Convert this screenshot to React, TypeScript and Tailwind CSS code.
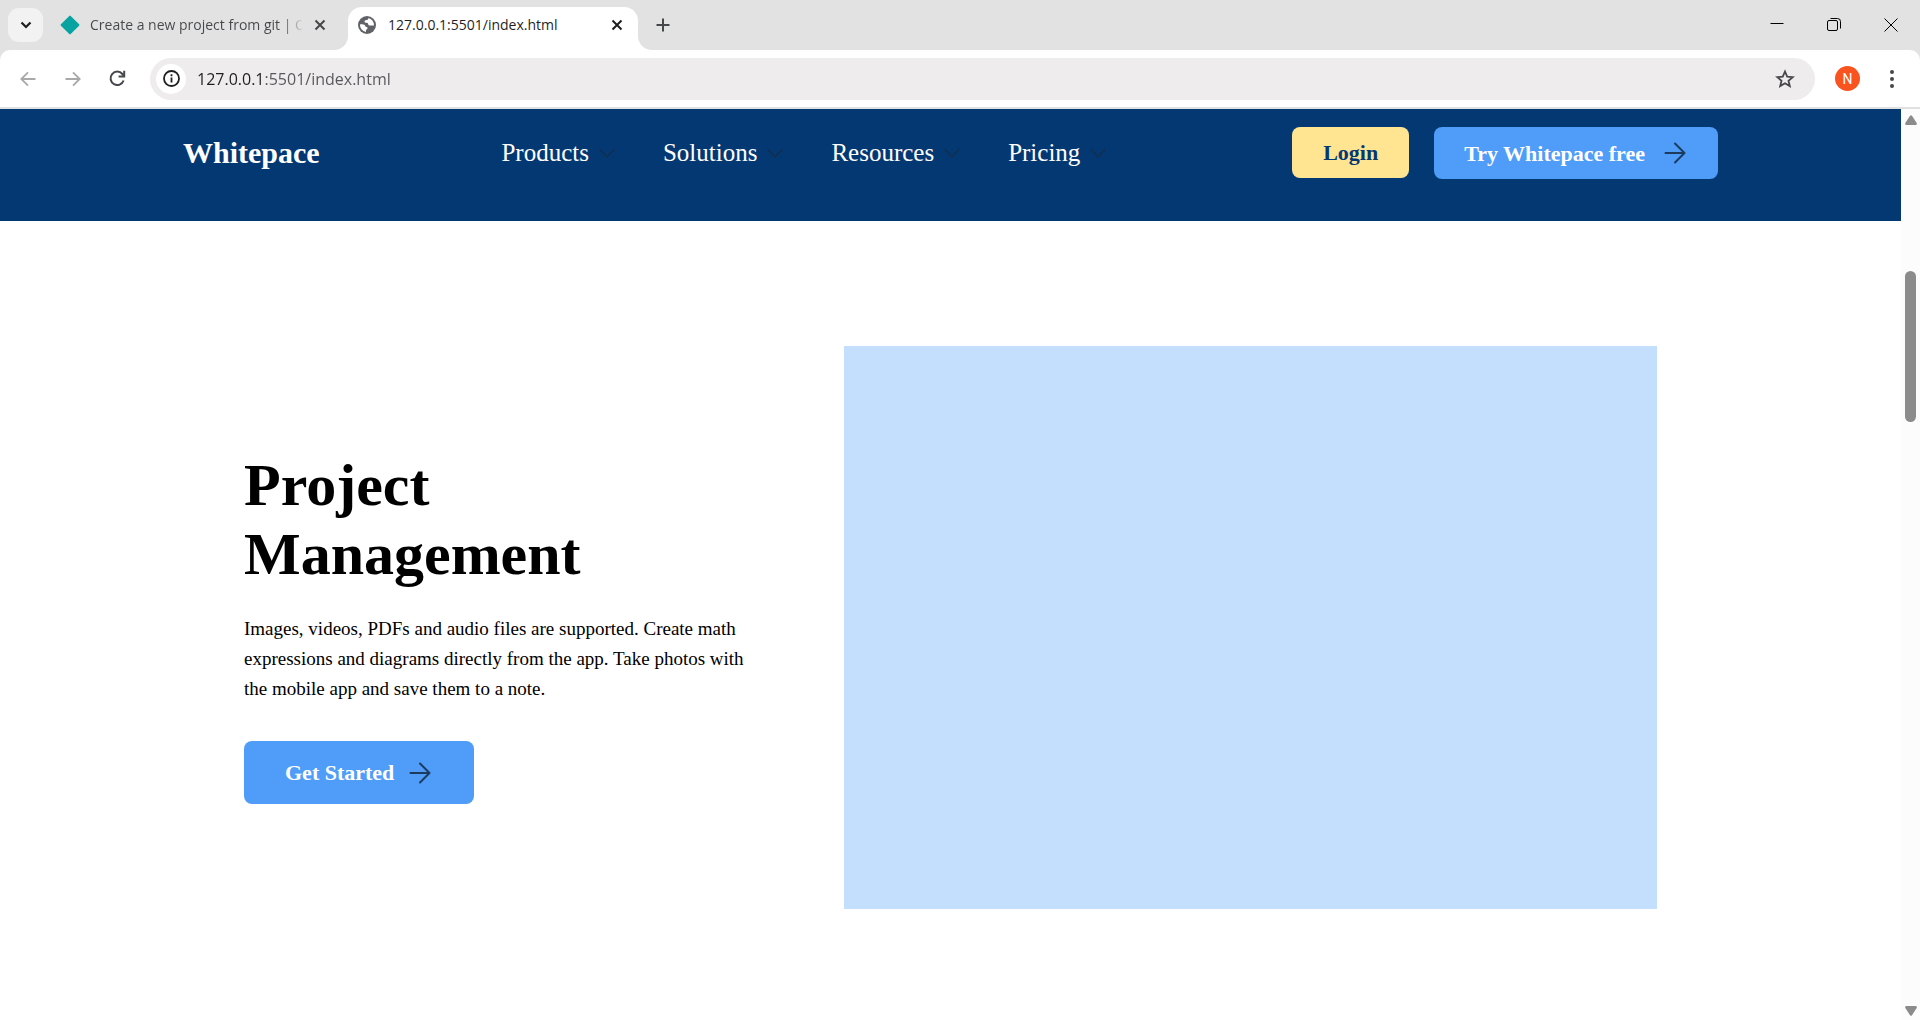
import React from "react";

function Chevron() {
  return (
    <svg viewBox="0 0 24 24" className="size-6" fill="none" stroke="#212529" strokeOpacity="0.5" strokeWidth="1.5" strokeLinecap="round" strokeLinejoin="round" aria-hidden="true">
      <path d="M5 8.500 12 16 19 8.500" />
    </svg>
  );
}

function ArrowRight() {
  return (
    <svg viewBox="0 0 22 22" className="size-[22px]" fill="none" stroke="#1d3a5f" strokeWidth="2" strokeLinecap="round" strokeLinejoin="round" aria-hidden="true">
      <path d="M1.500 11h19M11 1.500 20.500 11 11 20.500" />
    </svg>
  );
}

function CloseIcon() {
  return (
    <svg viewBox="0 0 12 12" className="size-3" fill="none" stroke="currentColor" strokeWidth="2" aria-hidden="true">
      <path d="M1.500 1.500l9 9M10.500 1.500l-9 9" />
    </svg>
  );
}

function TabStrip() {
  return (
    <div className="flex h-[50px] shrink-0 bg-[#e2e2e2] text-[#45474a]">
      <button aria-label="Search tabs" className="mt-2 ml-2 flex h-[34px] w-[35px] shrink-0 items-center justify-center rounded-[11px] bg-[#f2f2f2] text-[#1f1f1f]">
        <svg viewBox="0 0 12 12" className="size-3" fill="none" stroke="currentColor" strokeWidth="2.2" aria-hidden="true">
          <path d="M1.500 3.500 6 8l4.500-4.500" />
        </svg>
      </button>
      <div role="tab" className="ml-[17px] flex h-[50px] w-[266px] items-center">
        <svg viewBox="0 0 20 20" className="size-5 shrink-0" aria-hidden="true">
          <path d="M9.300.900q.700-.7 1.400 0l8.400 8.400q.7.7 0 1.400l-8.400 8.400q-.7.7-1.400 0L.9 10.700q-.7-.7 0-1.400z" fill="#06a3a0" />
        </svg>
        <span className="ml-[10px] w-[212px] bg-[linear-gradient(90deg,#45474a_192px,transparent_214px)] bg-clip-text text-sm whitespace-nowrap text-transparent">
          Create a new project from git | C
        </span>
        <button aria-label="Close tab" className="ml-3 shrink-0">
          <CloseIcon />
        </button>
      </div>
      <div role="tab" aria-selected="true" className="relative ml-[22px] mt-[7px] flex h-[43px] w-[290px] items-center rounded-t-[14px] bg-white pb-[7px] pl-[10px] text-[#1f1f1f]">
        <svg viewBox="0 0 14 14" className="absolute bottom-0 -left-3.5 size-3.5" aria-hidden="true">
          <path d="M14 0v14H0A14 14 0 0 0 14 0z" fill="#fff" />
        </svg>
        <svg viewBox="0 0 14 14" className="absolute -right-3.5 bottom-0 size-3.5" aria-hidden="true">
          <path d="M0 0v14h14A14 14 0 0 1 0 0z" fill="#fff" />
        </svg>
        <svg viewBox="0 0 18 18" className="size-[18px] shrink-0" aria-hidden="true">
          <circle cx="9" cy="9" r="9" fill="#5f6368" />
          <path d="M2 8.200c1.500 0 3.200.1 4.300.6 1 .5.600 1.700 1.500 1.900 1.200.2 1.700.5 1.700 1.500 0 1.200-1.500 1-1.500 2.200v1.500A7.200 7.200 0 0 1 2 8.200z" fill="#fff" />
          <path d="M10.300 2.100c.2 1.300-.5 1.800-1.700 2-1.500.2-2.100.7-2.100 1.700 0 .9 1 1 2.200 1 1.300 0 1.300 1 1.700 1.900.4.800 1.400.8 2.300.8h3.300A7.100 7.100 0 0 0 10.300 2.100z" fill="#fff" />
        </svg>
        <span className="ml-[12px] w-[216px] text-sm whitespace-nowrap">127.0.0.1:5501/index.html</span>
        <button aria-label="Close tab" className="ml-[7px] shrink-0">
          <CloseIcon />
        </button>
      </div>
      <button aria-label="New tab" className="ml-[18px] self-center">
        <svg viewBox="0 0 14 14" className="size-3.5" fill="none" stroke="currentColor" strokeWidth="2" aria-hidden="true">
          <path d="M7 .5v13M.5 7h13" />
        </svg>
      </button>
      <div className="mr-[22px] ml-auto flex items-center gap-[43px] text-black">
        <button aria-label="Minimize">
          <svg viewBox="0 0 14 14" className="size-3.5" fill="none" stroke="currentColor" aria-hidden="true">
            <path d="M.5 5.500h13" />
          </svg>
        </button>
        <button aria-label="Restore">
          <svg viewBox="0 0 14 14" className="size-3.5" fill="none" stroke="currentColor" strokeWidth="1" aria-hidden="true">
            <rect x=".5" y="2.500" width="10" height="10" rx="1.500" />
            <path d="M3.500.500h7a3 3 0 0 1 3 3v7" />
          </svg>
        </button>
        <button aria-label="Close window">
          <svg viewBox="0 0 14 14" className="size-3.5" fill="none" stroke="currentColor" aria-hidden="true">
            <path d="M.5.500l13 13M13.500.500l-13 13" />
          </svg>
        </button>
      </div>
    </div>
  );
}

function Toolbar() {
  return (
    <div className="shrink-0 bg-[#e2e2e2]">
      <div className="flex h-[57px] items-center rounded-t-[10px] bg-white pl-5 text-[#45474a]">
        <button aria-label="Back" className="text-[#a9a9a9]">
          <svg viewBox="0 0 16 16" className="size-4" fill="none" stroke="currentColor" strokeWidth="1.800" aria-hidden="true">
            <path d="M15.500 8H1.500M8 1.300 1.300 8 8 14.700" />
          </svg>
        </button>
        <button aria-label="Forward" className="ml-[29px] text-[#a9a9a9]">
          <svg viewBox="0 0 16 16" className="size-4" fill="none" stroke="currentColor" strokeWidth="1.800" aria-hidden="true">
            <path d="M.5 8h14M8 1.300 14.700 8 8 14.700" />
          </svg>
        </button>
        <button aria-label="Reload" className="ml-7">
          <svg viewBox="0 0 17 17" className="size-[17px]" aria-hidden="true">
            <path d="M14.600 10.500A6.700 6.700 0 1 1 13.400 4l1.300 1.600" fill="none" stroke="currentColor" strokeWidth="2" />
            <path d="M14.200.800h2v6.600H9.600v-2h4.600z" fill="currentColor" />
          </svg>
        </button>
        <div className="ml-6 flex h-[42px] flex-1 items-center rounded-full bg-[#eeecec] pr-5 pl-[6px]">
          <button aria-label="View site information" className="flex size-[30px] shrink-0 items-center justify-center rounded-full bg-white text-[#1f1f1f]">
            <svg viewBox="0 0 17 17" className="size-[17px]" aria-hidden="true">
              <circle cx="8.500" cy="8.500" r="7.500" fill="none" stroke="currentColor" strokeWidth="1.800" />
              <path d="M7.600 7.500h1.800v5H7.600zM7.600 4.300h1.800v1.900H7.600z" fill="currentColor" />
            </svg>
          </button>
          <input
            aria-label="Address"
            defaultValue="127.0.0.1:5501/index.html"
            className="ml-[11px] h-8 min-w-0 flex-1 bg-[linear-gradient(90deg,#1f1f1f_66px,#55575a_66px)] bg-clip-text text-base text-transparent outline-none"
          />
          <button aria-label="Bookmark this tab" className="shrink-0">
            <svg viewBox="0 0 20 20" className="size-5" fill="none" stroke="currentColor" strokeWidth="1.800" aria-hidden="true">
              <path d="M10 2.500l2.200 5.100 5.500.5-4.200 3.600 1.300 5.400L10 14.200l-4.800 2.900 1.300-5.400-4.200-3.600 5.500-.5z" />
            </svg>
          </button>
        </div>
        <button aria-label="Profile" className="ml-5 flex size-[25px] items-center justify-center rounded-full bg-[#f9541f] font-['Roboto',sans-serif] text-sm text-white">
          N
        </button>
        <button aria-label="Menu" className="mr-[26px] ml-[30px]">
          <svg viewBox="0 0 4 18" className="h-[18px] w-1" fill="currentColor" aria-hidden="true">
            <circle cx="2" cy="2" r="2" />
            <circle cx="2" cy="9" r="2" />
            <circle cx="2" cy="16" r="2" />
          </svg>
        </button>
      </div>
      <div className="h-0.5 bg-[#dfe1e1]" />
    </div>
  );
}

const links = ["Products", "Solutions", "Resources", "Pricing"];

function SiteHeader() {
  return (
    <header className="flex h-28 items-start justify-between bg-[#043873] px-[183px] pt-[18px] text-white">
      <a href="#home" className="text-[30px] leading-[52px] font-bold">Whitepace</a>
      <nav className="flex gap-11">
        {links.map((name) => (
          <a key={name} href={"#" + name.toLowerCase()} className="flex items-center gap-1.5 text-[25px] leading-[52px]">
            {name}
            <Chevron />
          </a>
        ))}
      </nav>
      <div className="flex items-start gap-[25px] text-[22px] font-bold">
        <button className="h-[51px] rounded-lg bg-[#ffe492] px-[31px] text-[#043873]">Login</button>
        <button className="flex h-[52px] items-center gap-[19px] rounded-lg bg-[#4f9cf9] pr-8 pl-[30px]">
          Try Whitepace free
          <ArrowRight />
        </button>
      </div>
    </header>
  );
}

function ProjectSection() {
  return (
    <section className="flex items-center gap-[90px] px-[244px] pt-[125px] text-black">
      <div className="w-[510px] shrink-0">
        <h1 className="text-[60px] leading-[69px] font-bold">Project Management</h1>
        <p className="mt-[25px] text-[19px] leading-[30px]">
          Images, videos, PDFs and audio files are supported. Create math expressions and diagrams directly from the app. Take photos with the mobile app and save them to a note.
        </p>
        <button className="mt-[37px] flex h-[63px] items-center gap-[15px] rounded-lg bg-[#4f9cf9] pr-[43px] pl-[41px] text-[22px] font-bold text-white">
          Get Started
          <ArrowRight />
        </button>
      </div>
      <div className="h-[563px] flex-1 bg-[#c4defd]" />
    </section>
  );
}

function Scrollbar() {
  return (
    <div className="flex w-[19px] shrink-0 flex-col items-center bg-[#fcfcfc] pt-1.5 pb-1" aria-hidden="true">
      <svg viewBox="0 0 12 10" className="h-2.5 w-3" fill="#8b8b8b">
        <path d="M5 .700q1-1 2 0l4.700 7.300q.5 2-1 2H1.300q-1.500 0-1-2z" />
      </svg>
      <div className="mt-[146px] h-[151px] w-[11px] rounded-full bg-[#8b8b8b]" />
      <svg viewBox="0 0 12 10" className="mt-auto h-2.5 w-3" fill="#8b8b8b">
        <path d="M5 9.300q1 1 2 0L11.700 2q.5-2-1-2H1.300q-1.500 0-1 2z" />
      </svg>
    </div>
  );
}

export default function App() {
  return (
    <div className="flex h-screen flex-col overflow-hidden bg-white font-['Open_Sans',sans-serif]">
      <TabStrip />
      <Toolbar />
      <div className="flex min-h-0 flex-1">
        <main className="min-w-0 flex-1 overflow-hidden font-['Liberation_Serif',serif]">
          <SiteHeader />
          <ProjectSection />
        </main>
        <Scrollbar />
      </div>
    </div>
  );
}
